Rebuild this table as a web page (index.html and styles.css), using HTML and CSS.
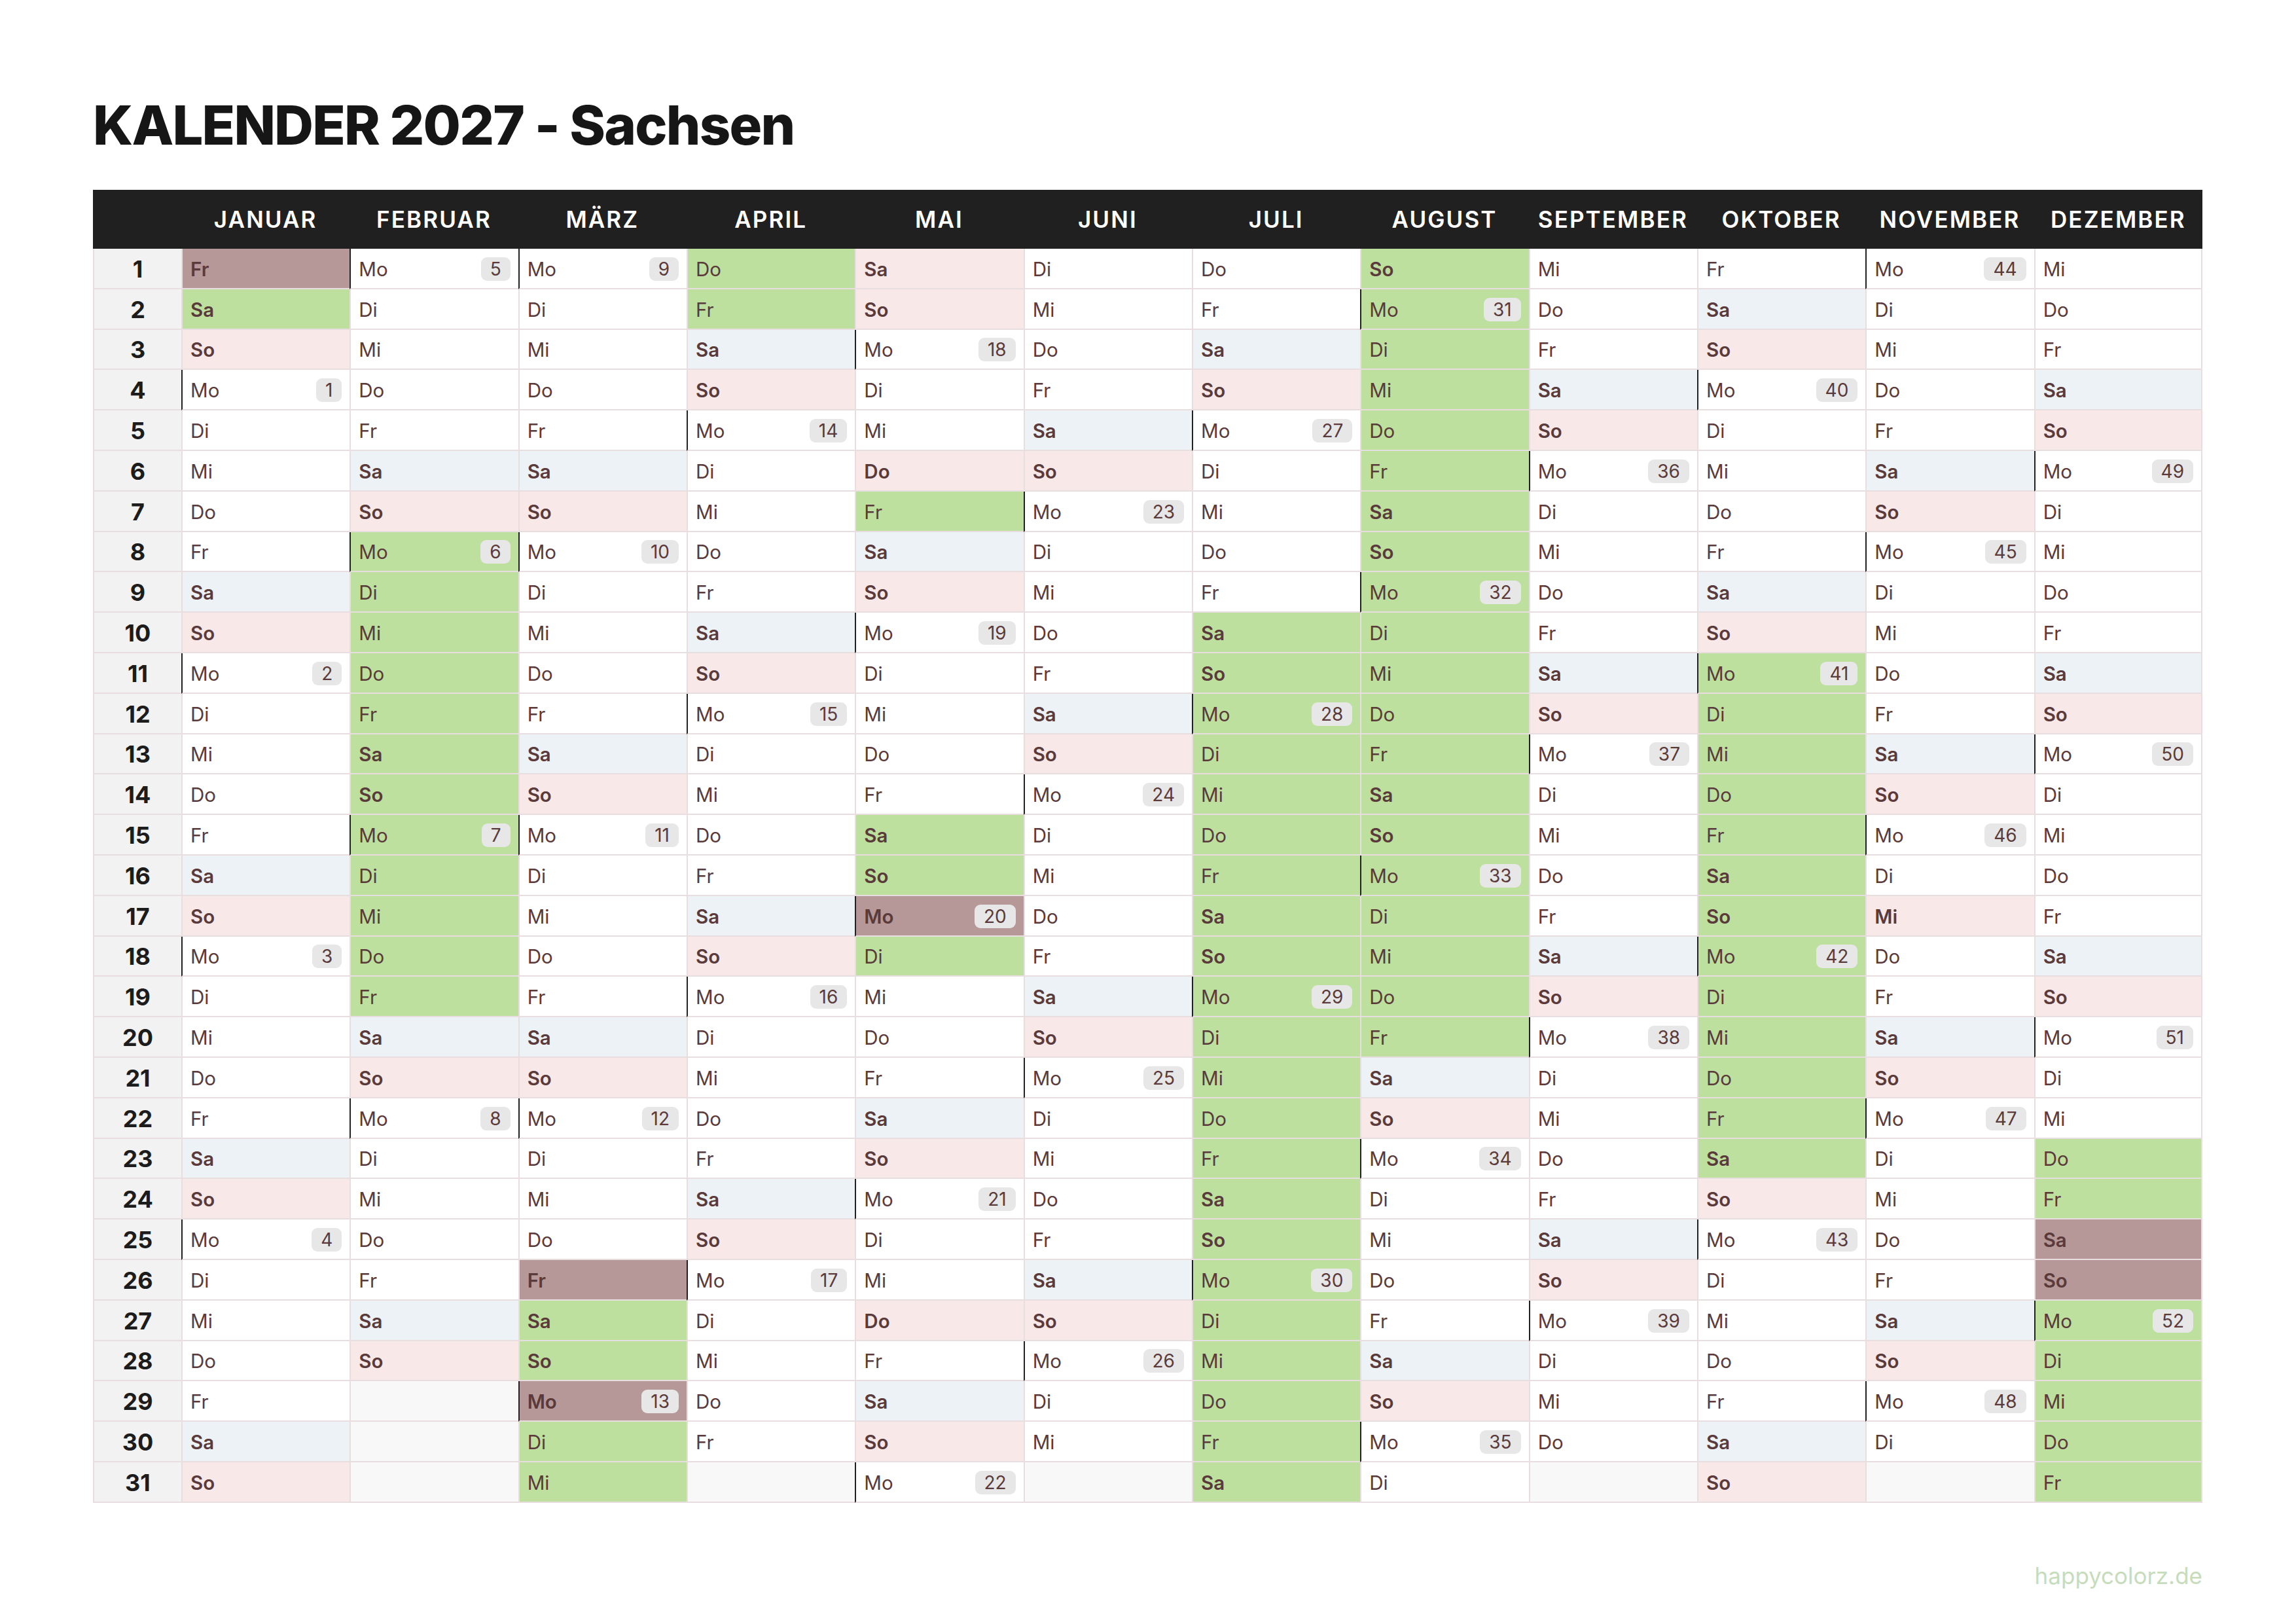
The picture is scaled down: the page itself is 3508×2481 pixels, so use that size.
FILE: index.html
```html
<!DOCTYPE html>
<html lang="de">
<head>
<meta charset="utf-8">
<title>Kalender 2027 - Sachsen</title>
<link rel="stylesheet" href="styles.css">
</head>
<body>
<div class="page">
<h1 class="title">KALENDER 2027 - Sachsen</h1>
<div class="cal">
<div class="h"></div><div class="h">JANUAR</div><div class="h">FEBRUAR</div><div class="h">MÄRZ</div><div class="h">APRIL</div><div class="h">MAI</div><div class="h">JUNI</div><div class="h">JULI</div><div class="h">AUGUST</div><div class="h">SEPTEMBER</div><div class="h">OKTOBER</div><div class="h">NOVEMBER</div><div class="h">DEZEMBER</div>

<div class="c n">1</div><div class="c ho">Fr</div><div class="c mo">Mo<span class="kw">5</span></div><div class="c mo">Mo<span class="kw">9</span></div><div class="c fe">Do</div><div class="c ft">Sa</div><div class="c">Di</div><div class="c">Do</div><div class="c so fe">So</div><div class="c">Mi</div><div class="c">Fr</div><div class="c mo">Mo<span class="kw">44</span></div><div class="c">Mi</div>

<div class="c n">2</div><div class="c sa fe">Sa</div><div class="c">Di</div><div class="c">Di</div><div class="c fe">Fr</div><div class="c so">So</div><div class="c">Mi</div><div class="c">Fr</div><div class="c fe mo">Mo<span class="kw">31</span></div><div class="c">Do</div><div class="c sa">Sa</div><div class="c">Di</div><div class="c">Do</div>

<div class="c n">3</div><div class="c so">So</div><div class="c">Mi</div><div class="c">Mi</div><div class="c sa">Sa</div><div class="c mo">Mo<span class="kw">18</span></div><div class="c">Do</div><div class="c sa">Sa</div><div class="c fe">Di</div><div class="c">Fr</div><div class="c so">So</div><div class="c">Mi</div><div class="c">Fr</div>

<div class="c n">4</div><div class="c mo">Mo<span class="kw">1</span></div><div class="c">Do</div><div class="c">Do</div><div class="c so">So</div><div class="c">Di</div><div class="c">Fr</div><div class="c so">So</div><div class="c fe">Mi</div><div class="c sa">Sa</div><div class="c mo">Mo<span class="kw">40</span></div><div class="c">Do</div><div class="c sa">Sa</div>

<div class="c n">5</div><div class="c">Di</div><div class="c">Fr</div><div class="c">Fr</div><div class="c mo">Mo<span class="kw">14</span></div><div class="c">Mi</div><div class="c sa">Sa</div><div class="c mo">Mo<span class="kw">27</span></div><div class="c fe">Do</div><div class="c so">So</div><div class="c">Di</div><div class="c">Fr</div><div class="c so">So</div>

<div class="c n">6</div><div class="c">Mi</div><div class="c sa">Sa</div><div class="c sa">Sa</div><div class="c">Di</div><div class="c ft">Do</div><div class="c so">So</div><div class="c">Di</div><div class="c fe">Fr</div><div class="c mo">Mo<span class="kw">36</span></div><div class="c">Mi</div><div class="c sa">Sa</div><div class="c mo">Mo<span class="kw">49</span></div>

<div class="c n">7</div><div class="c">Do</div><div class="c so">So</div><div class="c so">So</div><div class="c">Mi</div><div class="c fe">Fr</div><div class="c mo">Mo<span class="kw">23</span></div><div class="c">Mi</div><div class="c sa fe">Sa</div><div class="c">Di</div><div class="c">Do</div><div class="c so">So</div><div class="c">Di</div>

<div class="c n">8</div><div class="c">Fr</div><div class="c fe mo">Mo<span class="kw">6</span></div><div class="c mo">Mo<span class="kw">10</span></div><div class="c">Do</div><div class="c sa">Sa</div><div class="c">Di</div><div class="c">Do</div><div class="c so fe">So</div><div class="c">Mi</div><div class="c">Fr</div><div class="c mo">Mo<span class="kw">45</span></div><div class="c">Mi</div>

<div class="c n">9</div><div class="c sa">Sa</div><div class="c fe">Di</div><div class="c">Di</div><div class="c">Fr</div><div class="c so">So</div><div class="c">Mi</div><div class="c">Fr</div><div class="c fe mo">Mo<span class="kw">32</span></div><div class="c">Do</div><div class="c sa">Sa</div><div class="c">Di</div><div class="c">Do</div>

<div class="c n">10</div><div class="c so">So</div><div class="c fe">Mi</div><div class="c">Mi</div><div class="c sa">Sa</div><div class="c mo">Mo<span class="kw">19</span></div><div class="c">Do</div><div class="c sa fe">Sa</div><div class="c fe">Di</div><div class="c">Fr</div><div class="c so">So</div><div class="c">Mi</div><div class="c">Fr</div>

<div class="c n">11</div><div class="c mo">Mo<span class="kw">2</span></div><div class="c fe">Do</div><div class="c">Do</div><div class="c so">So</div><div class="c">Di</div><div class="c">Fr</div><div class="c so fe">So</div><div class="c fe">Mi</div><div class="c sa">Sa</div><div class="c fe mo">Mo<span class="kw">41</span></div><div class="c">Do</div><div class="c sa">Sa</div>

<div class="c n">12</div><div class="c">Di</div><div class="c fe">Fr</div><div class="c">Fr</div><div class="c mo">Mo<span class="kw">15</span></div><div class="c">Mi</div><div class="c sa">Sa</div><div class="c fe mo">Mo<span class="kw">28</span></div><div class="c fe">Do</div><div class="c so">So</div><div class="c fe">Di</div><div class="c">Fr</div><div class="c so">So</div>

<div class="c n">13</div><div class="c">Mi</div><div class="c sa fe">Sa</div><div class="c sa">Sa</div><div class="c">Di</div><div class="c">Do</div><div class="c so">So</div><div class="c fe">Di</div><div class="c fe">Fr</div><div class="c mo">Mo<span class="kw">37</span></div><div class="c fe">Mi</div><div class="c sa">Sa</div><div class="c mo">Mo<span class="kw">50</span></div>

<div class="c n">14</div><div class="c">Do</div><div class="c so fe">So</div><div class="c so">So</div><div class="c">Mi</div><div class="c">Fr</div><div class="c mo">Mo<span class="kw">24</span></div><div class="c fe">Mi</div><div class="c sa fe">Sa</div><div class="c">Di</div><div class="c fe">Do</div><div class="c so">So</div><div class="c">Di</div>

<div class="c n">15</div><div class="c">Fr</div><div class="c fe mo">Mo<span class="kw">7</span></div><div class="c mo">Mo<span class="kw">11</span></div><div class="c">Do</div><div class="c sa fe">Sa</div><div class="c">Di</div><div class="c fe">Do</div><div class="c so fe">So</div><div class="c">Mi</div><div class="c fe">Fr</div><div class="c mo">Mo<span class="kw">46</span></div><div class="c">Mi</div>

<div class="c n">16</div><div class="c sa">Sa</div><div class="c fe">Di</div><div class="c">Di</div><div class="c">Fr</div><div class="c so fe">So</div><div class="c">Mi</div><div class="c fe">Fr</div><div class="c fe mo">Mo<span class="kw">33</span></div><div class="c">Do</div><div class="c sa fe">Sa</div><div class="c">Di</div><div class="c">Do</div>

<div class="c n">17</div><div class="c so">So</div><div class="c fe">Mi</div><div class="c">Mi</div><div class="c sa">Sa</div><div class="c ho mo">Mo<span class="kw">20</span></div><div class="c">Do</div><div class="c sa fe">Sa</div><div class="c fe">Di</div><div class="c">Fr</div><div class="c so fe">So</div><div class="c ft">Mi</div><div class="c">Fr</div>

<div class="c n">18</div><div class="c mo">Mo<span class="kw">3</span></div><div class="c fe">Do</div><div class="c">Do</div><div class="c so">So</div><div class="c fe">Di</div><div class="c">Fr</div><div class="c so fe">So</div><div class="c fe">Mi</div><div class="c sa">Sa</div><div class="c fe mo">Mo<span class="kw">42</span></div><div class="c">Do</div><div class="c sa">Sa</div>

<div class="c n">19</div><div class="c">Di</div><div class="c fe">Fr</div><div class="c">Fr</div><div class="c mo">Mo<span class="kw">16</span></div><div class="c">Mi</div><div class="c sa">Sa</div><div class="c fe mo">Mo<span class="kw">29</span></div><div class="c fe">Do</div><div class="c so">So</div><div class="c fe">Di</div><div class="c">Fr</div><div class="c so">So</div>

<div class="c n">20</div><div class="c">Mi</div><div class="c sa">Sa</div><div class="c sa">Sa</div><div class="c">Di</div><div class="c">Do</div><div class="c so">So</div><div class="c fe">Di</div><div class="c fe">Fr</div><div class="c mo">Mo<span class="kw">38</span></div><div class="c fe">Mi</div><div class="c sa">Sa</div><div class="c mo">Mo<span class="kw">51</span></div>

<div class="c n">21</div><div class="c">Do</div><div class="c so">So</div><div class="c so">So</div><div class="c">Mi</div><div class="c">Fr</div><div class="c mo">Mo<span class="kw">25</span></div><div class="c fe">Mi</div><div class="c sa">Sa</div><div class="c">Di</div><div class="c fe">Do</div><div class="c so">So</div><div class="c">Di</div>

<div class="c n">22</div><div class="c">Fr</div><div class="c mo">Mo<span class="kw">8</span></div><div class="c mo">Mo<span class="kw">12</span></div><div class="c">Do</div><div class="c sa">Sa</div><div class="c">Di</div><div class="c fe">Do</div><div class="c so">So</div><div class="c">Mi</div><div class="c fe">Fr</div><div class="c mo">Mo<span class="kw">47</span></div><div class="c">Mi</div>

<div class="c n">23</div><div class="c sa">Sa</div><div class="c">Di</div><div class="c">Di</div><div class="c">Fr</div><div class="c so">So</div><div class="c">Mi</div><div class="c fe">Fr</div><div class="c mo">Mo<span class="kw">34</span></div><div class="c">Do</div><div class="c sa fe">Sa</div><div class="c">Di</div><div class="c fe">Do</div>

<div class="c n">24</div><div class="c so">So</div><div class="c">Mi</div><div class="c">Mi</div><div class="c sa">Sa</div><div class="c mo">Mo<span class="kw">21</span></div><div class="c">Do</div><div class="c sa fe">Sa</div><div class="c">Di</div><div class="c">Fr</div><div class="c so">So</div><div class="c">Mi</div><div class="c fe">Fr</div>

<div class="c n">25</div><div class="c mo">Mo<span class="kw">4</span></div><div class="c">Do</div><div class="c">Do</div><div class="c so">So</div><div class="c">Di</div><div class="c">Fr</div><div class="c so fe">So</div><div class="c">Mi</div><div class="c sa">Sa</div><div class="c mo">Mo<span class="kw">43</span></div><div class="c">Do</div><div class="c ho">Sa</div>

<div class="c n">26</div><div class="c">Di</div><div class="c">Fr</div><div class="c ho">Fr</div><div class="c mo">Mo<span class="kw">17</span></div><div class="c">Mi</div><div class="c sa">Sa</div><div class="c fe mo">Mo<span class="kw">30</span></div><div class="c">Do</div><div class="c so">So</div><div class="c">Di</div><div class="c">Fr</div><div class="c ho">So</div>

<div class="c n">27</div><div class="c">Mi</div><div class="c sa">Sa</div><div class="c sa fe">Sa</div><div class="c">Di</div><div class="c ft">Do</div><div class="c so">So</div><div class="c fe">Di</div><div class="c">Fr</div><div class="c mo">Mo<span class="kw">39</span></div><div class="c">Mi</div><div class="c sa">Sa</div><div class="c fe mo">Mo<span class="kw">52</span></div>

<div class="c n">28</div><div class="c">Do</div><div class="c so">So</div><div class="c so fe">So</div><div class="c">Mi</div><div class="c">Fr</div><div class="c mo">Mo<span class="kw">26</span></div><div class="c fe">Mi</div><div class="c sa">Sa</div><div class="c">Di</div><div class="c">Do</div><div class="c so">So</div><div class="c fe">Di</div>

<div class="c n">29</div><div class="c">Fr</div><div class="c x"></div><div class="c ho mo">Mo<span class="kw">13</span></div><div class="c">Do</div><div class="c sa">Sa</div><div class="c">Di</div><div class="c fe">Do</div><div class="c so">So</div><div class="c">Mi</div><div class="c">Fr</div><div class="c mo">Mo<span class="kw">48</span></div><div class="c fe">Mi</div>

<div class="c n">30</div><div class="c sa">Sa</div><div class="c x"></div><div class="c fe">Di</div><div class="c">Fr</div><div class="c so">So</div><div class="c">Mi</div><div class="c fe">Fr</div><div class="c mo">Mo<span class="kw">35</span></div><div class="c">Do</div><div class="c sa">Sa</div><div class="c">Di</div><div class="c fe">Do</div>

<div class="c n">31</div><div class="c so">So</div><div class="c x"></div><div class="c fe">Mi</div><div class="c x"></div><div class="c mo">Mo<span class="kw">22</span></div><div class="c x"></div><div class="c sa fe">Sa</div><div class="c">Di</div><div class="c x"></div><div class="c so">So</div><div class="c x"></div><div class="c fe">Fr</div>
</div>
<div class="foot">happycolorz.de</div>
</div>
</body>
</html>
```

FILE: styles.css
```css
html, body {
  margin: 0;
  padding: 0;
  background: #ffffff;
}

body {
  width: 3508px;
  height: 2481px;
  overflow: hidden;
  font-family: Inter, "Noto Sans", sans-serif;
}

.page {
  padding: 150px 143px 0 142px;
}

.title {
  margin: 0 0 57px 0;
  font-size: 83px;
  line-height: 83px;
  font-weight: 800;
  letter-spacing: -0.022em;
  color: #161616;
}

.cal {
  display: grid;
  width: 3223px;
  grid-template-columns: 135px repeat(12, 1fr);
  grid-template-rows: 90px repeat(31, 61.8px);
}

.h {
  background: #202020;
  color: #ffffff;
  font-size: 35px;
  font-weight: 600;
  letter-spacing: 0.06em;
  display: flex;
  align-items: center;
  justify-content: center;
}

.c {
  box-sizing: border-box;
  border-left: 2px solid #e8dedf;
  border-bottom: 2px solid #e8dedf;
  background: #ffffff;
  color: #5a3a3a;
  font-size: 29.5px;
  font-weight: 400;
  display: flex;
  align-items: center;
  justify-content: space-between;
  padding: 2px 12px 0 12px;
}

.c:nth-child(13n) {
  border-right: 2px solid #e8dedf;
}

.n {
  background: #f2f2f2;
  color: #1c1c1c;
  font-size: 36px;
  font-weight: 700;
  justify-content: center;
  padding: 2px 0 0 0;
}

.sa {
  background: #edf2f6;
  font-weight: 600;
}

.so {
  background: #f8e8e8;
  font-weight: 600;
}

.ft {
  background: #f8e8e8;
  font-weight: 600;
}

.fe {
  background: #bde09e;
}

.ho {
  background: #b79898;
  font-weight: 600;
}

.x {
  background: #f8f8f8;
}

.mo {
  border-left-color: #222222;
}

.kw {
  background: #e7e7e7;
  border-radius: 9px;
  height: 36px;
  line-height: 36px;
  padding: 0 14px;
  font-size: 28px;
  font-weight: 400;
  color: #5a3a3a;
}

.foot {
  margin-top: 94px;
  width: 3223px;
  text-align: right;
  font-size: 35px;
  line-height: 35px;
  color: #c6dcba;
}
```
